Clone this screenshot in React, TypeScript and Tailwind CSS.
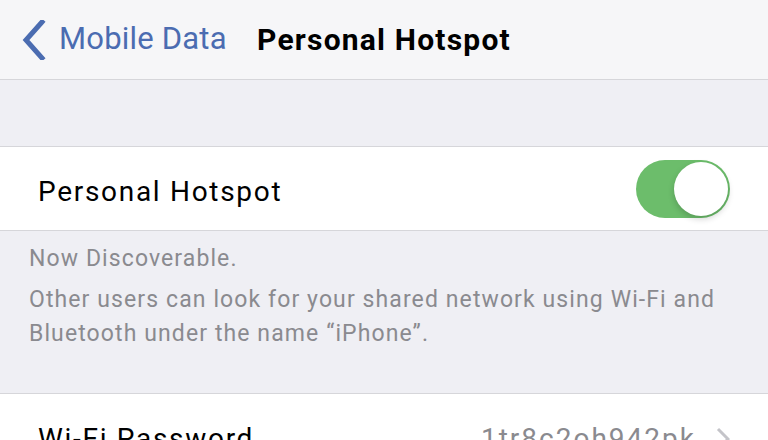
import React from "react";

const font = { fontFamily: "Roboto, 'Liberation Sans', sans-serif" };

function Toggle() {
  return (
    <div className="relative h-[58px] w-[94px] rounded-full bg-[#6cbd6b]">
      <div className="absolute right-[2px] top-[2px] h-[54px] w-[54px] rounded-full bg-white shadow-[0_3px_6px_rgba(0,0,0,0.18)]" />
    </div>
  );
}

export default function App() {
  return (
    <div className="h-[440px] w-[768px] overflow-hidden bg-[#efeff4]" style={font}>
      <header className="grid h-[80px] grid-cols-[1fr_auto_1fr] items-center border-b border-[#d6d6da] bg-[#f6f6f8]">
        <div className="flex items-center pl-[22px]">
          <svg width="24" height="40" viewBox="0 0 24 40" className="mr-[13px]">
            <path d="M20 2 L4 20 L20 38" fill="none" stroke="#4b6cb1" strokeWidth="5" strokeLinecap="square" />
          </svg>
          <span className="text-[31px] tracking-[0.2px] text-[#4b6cb1]">Mobile Data</span>
        </div>
        <h1 className="text-[30px] font-bold tracking-[1.2px] text-black">Personal Hotspot</h1>
        <div />
      </header>

      <div className="h-[67px] border-b border-[#d6d6da]" />

      <div className="flex h-[84px] items-center justify-between border-b border-[#d6d6da] bg-white px-[38px]">
        <span className="pt-[6px] text-[28px] tracking-[1.7px] text-black">Personal Hotspot</span>
        <Toggle />
      </div>

      <div className="h-[162px] pl-[29px] pr-[10px] pt-[11px] text-[23px] leading-[34px] tracking-[1.1px] text-[#8a8a8f]">
        <p>Now Discoverable.</p>
        <p className="mt-[7px]">
          Other users can look for your shared network using Wi-Fi and
          <br />
          Bluetooth under the name “iPhone”.
        </p>
      </div>

      <div className="flex h-[84px] items-center justify-between border-t border-[#d6d6da] bg-white pl-[38px] pr-[38px]">
        <span className="pt-[6px] text-[28px] tracking-[1.7px] text-black">Wi-Fi Password</span>
        <div className="flex items-center gap-[20px] pt-[6px]">
          <span className="text-[28px] tracking-[2px] text-[#8a8a8f]">1tr8c2oh942pk</span>
          <svg width="14" height="24" viewBox="0 0 14 24">
            <path d="M2 2 L12 12 L2 22" fill="none" stroke="#c4c4c9" strokeWidth="3" />
          </svg>
        </div>
      </div>
    </div>
  );
}
